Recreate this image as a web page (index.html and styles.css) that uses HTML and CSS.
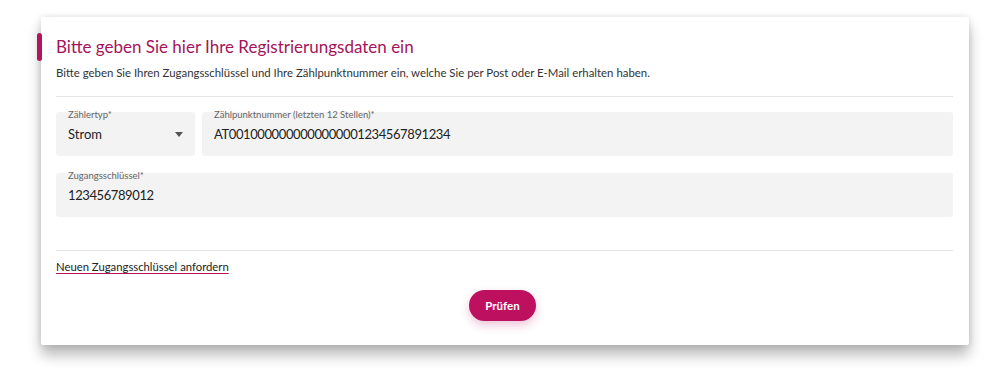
FILE: index.html
```html
<!DOCTYPE html>
<html lang="de">
<head>
<meta charset="utf-8">
<link rel="stylesheet" href="styles.css">
</head>
<body>
<div class="card">
  <span class="accent"></span>
  <h1 class="title">Bitte geben Sie hier Ihre Registrierungsdaten ein</h1>
  <p class="intro">Bitte geben Sie Ihren Zugangsschlüssel und Ihre Zählpunktnummer ein, welche Sie per Post oder E-Mail erhalten haben.</p>
  <hr class="rule">
  <div class="row">
    <div class="field field-select">
      <span class="label">Zählertyp*</span>
      <span class="value">Strom</span>
      <svg class="caret" width="8" height="5" viewBox="0 0 8 5"><path d="M0 0h8L4 5z" fill="#555"/></svg>
    </div>
    <div class="field field-grow">
      <span class="label">Zählpunktnummer (letzten 12 Stellen)*</span>
      <span class="value value-num">AT0010000000000000001234567891234</span>
    </div>
  </div>
  <div class="row">
    <div class="field field-grow">
      <span class="label">Zugangsschlüssel*</span>
      <span class="value value-num">123456789012</span>
    </div>
  </div>
  <hr class="rule rule-bottom">
  <a class="link" href="#">Neuen Zugangsschlüssel anfordern</a>
  <div class="actions">
    <button class="btn">Prüfen</button>
  </div>
</div>
</body>
</html>
```
FILE: styles.css
```css
* { box-sizing: border-box; }
html, body { margin: 0; background: #fff; }
body {
  font-family: Lato, "Noto Sans", sans-serif;
  color: #2b2b2b;
  padding: 17px 0 0 41px;
  width: 1004px;
  height: 386px;
  overflow: hidden;
}
.card {
  position: relative;
  width: 928px;
  height: 328px;
  background: #fff;
  padding: 19px 16px 0 15px;
  box-shadow: 0 10px 14px rgba(0,0,0,0.28), 0 0 6px rgba(0,0,0,0.12);
  border-radius: 2px;
}
.accent {
  position: absolute;
  left: -4px;
  top: 16px;
  width: 5px;
  height: 28px;
  border-radius: 3px;
  background: #b5135c;
}
.title {
  margin: 0;
  font-size: 17px;
  line-height: 22px;
  font-weight: 400;
  color: #a5145a;
}
.intro {
  margin: 8px 0 0;
  font-size: 11.4px;
  line-height: 14px;
  color: #333;
}
.rule {
  border: 0;
  border-top: 1px solid #e4e4e4;
  margin: 16px 0 0;
}
.row {
  display: flex;
  gap: 7px;
  margin-top: 15px;
}
.row + .row { margin-top: 17px; }
.field {
  position: relative;
  height: 44px;
  background: #f3f3f3;
  border-radius: 3px;
  padding: 0 12px;
}
.field-select { width: 139px; }
.field-grow { flex: 1; }
.label {
  position: absolute;
  left: 12px;
  top: -3px;
  font-size: 9.5px;
  line-height: 11px;
  color: #666;
}
.value {
  display: block;
  padding-top: 14px;
  font-size: 13px;
  line-height: 16px;
  color: #222;
}
.value-num { letter-spacing: -0.4px; }
.caret {
  position: absolute;
  right: 12px;
  top: 20px;
}
.rule-bottom { margin-top: 33px; }
.link {
  display: inline-block;
  margin-top: 9px;
  font-size: 11.3px;
  line-height: 14px;
  color: #222;
  text-decoration: underline;
  text-decoration-color: #b5135c;
  text-underline-offset: 2px;
}
.actions {
  display: flex;
  justify-content: center;
  margin-top: 16px;
}
.btn {
  width: 67px;
  height: 31px;
  border: 0;
  border-radius: 16px;
  background: #bd115f;
  color: #fff;
  font-family: Lato, "Noto Sans", sans-serif;
  font-weight: 700;
  font-size: 11.5px;
  box-shadow: 0 4px 10px rgba(189,17,95,0.25);
  margin-left: -4px;
}
```
